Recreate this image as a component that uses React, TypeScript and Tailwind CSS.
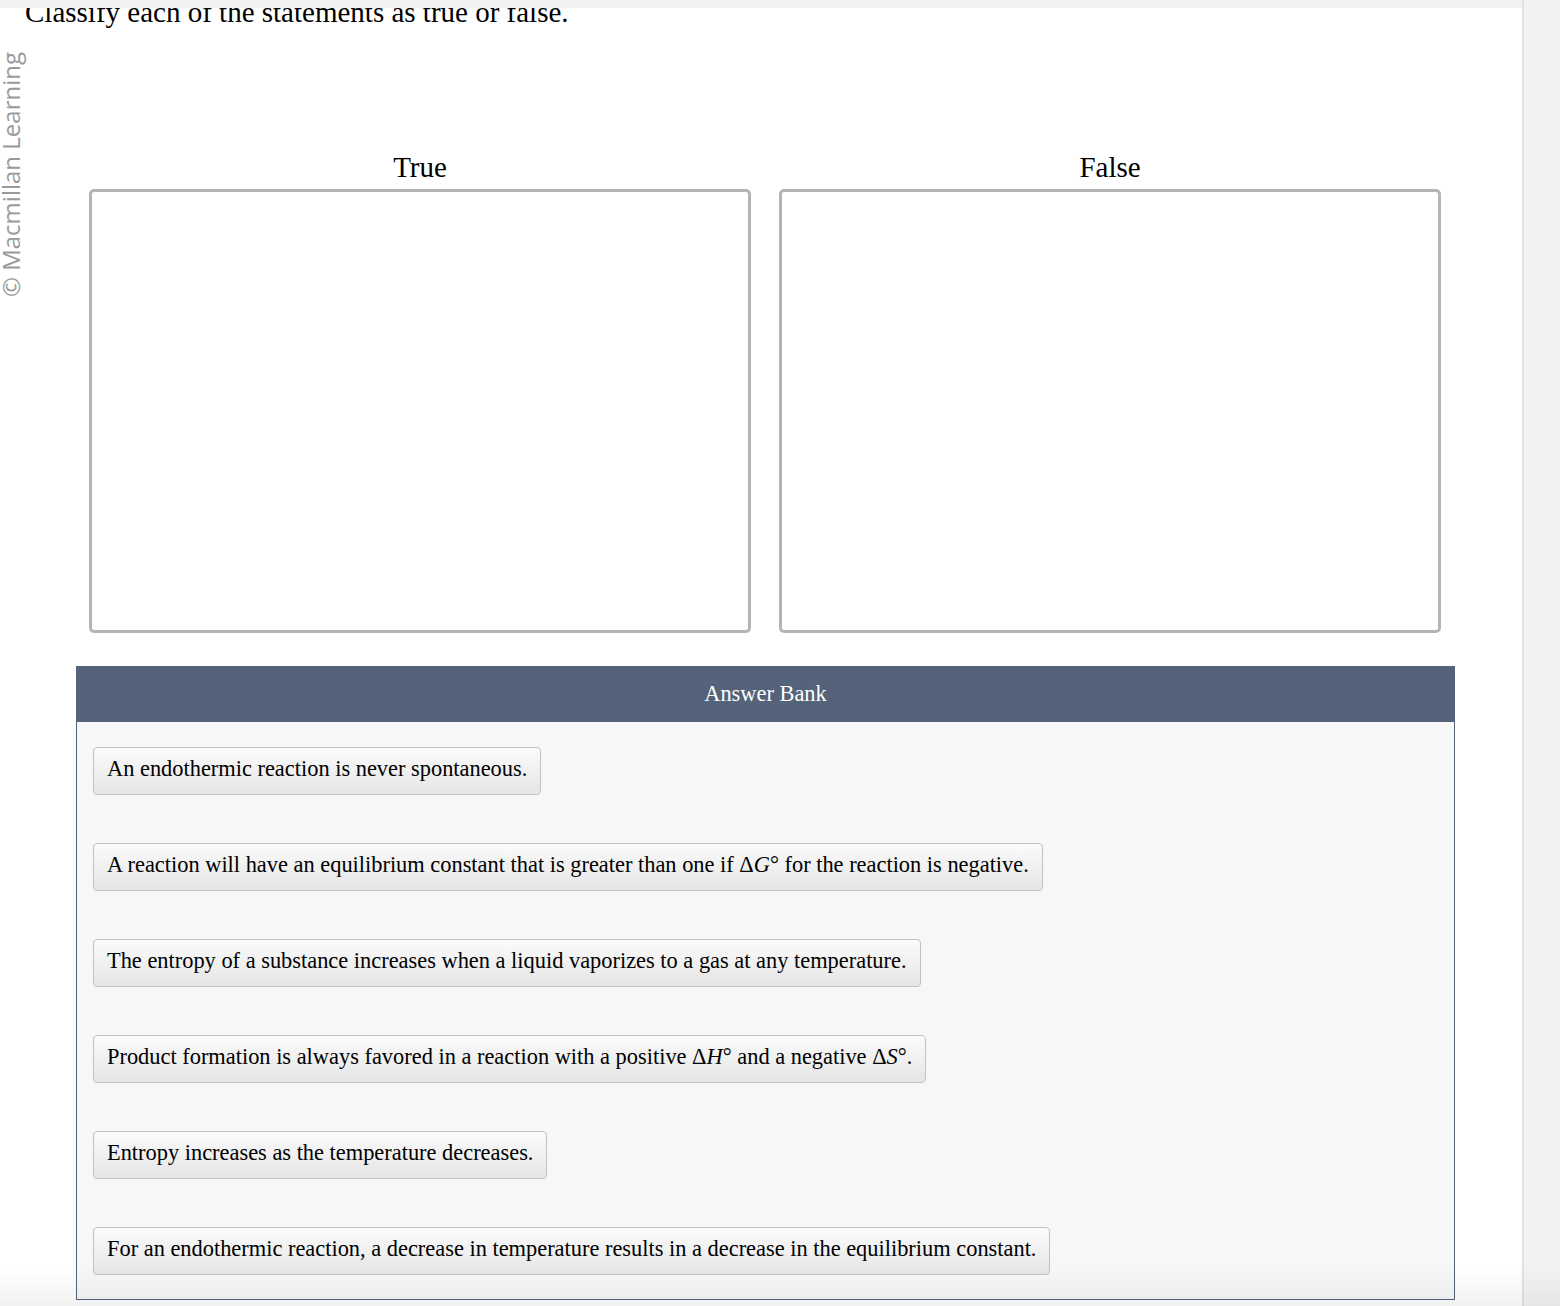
import React from "react";

const serif = { fontFamily: '"Liberation Serif", "Times New Roman", serif' };

function Delta({ v }: { v: string }) {
    return (
        <span>
            Δ<i>{v}</i>°
        </span>
    );
}

const statements: React.ReactNode[] = [
    "An endothermic reaction is never spontaneous.",
    <>A reaction will have an equilibrium constant that is greater than one if <Delta v="G" /> for the reaction is negative.</>,
    "The entropy of a substance increases when a liquid vaporizes to a gas at any temperature.",
    <>Product formation is always favored in a reaction with a positive <Delta v="H" /> and a negative <Delta v="S" />.</>,
    "Entropy increases as the temperature decreases.",
    "For an endothermic reaction, a decrease in temperature results in a decrease in the equilibrium constant.",
];

export default function App() {
    return (
        <div className="relative w-[1560px] h-[1306px] overflow-hidden bg-[#f2f2f2] flex" style={serif}>
            {/* page */}
            <div className="relative w-[1522px] h-full bg-white flex">
                {/* side credit */}
                <div className="w-[25px] shrink-0 relative">
                    <div
                        className="absolute left-[-1px] top-[297px] origin-top-left -rotate-90 whitespace-nowrap text-[24px] leading-[24px] text-[#9a9a9a]"
                        style={{ fontFamily: '"Open Sans", "Noto Sans", sans-serif' }}
                    >
                        © Macmillan Learning
                    </div>
                </div>

                <div className="flex-1 flex flex-col">
                    <div className="text-[29px] leading-[30px] text-black mt-[-3px] whitespace-nowrap">
                        Classify each of the statements as true or false.
                    </div>

                    {/* drop zones */}
                    <div className="flex gap-[28px] ml-[64px] mt-[125px] w-[1352px]">
                        {["True", "False"].map((label) => (
                            <div key={label} className="flex-1 flex flex-col">
                                <div className="text-center text-[29px] leading-[30px] text-black mb-[7px]">{label}</div>
                                <div className="h-[444px] border-[3px] border-[#b4b4b4] rounded-[5px] bg-white" />
                            </div>
                        ))}
                    </div>

                    {/* answer bank */}
                    <div className="ml-[51px] mt-[33px] w-[1379px] flex flex-col">
                        <div className="h-[56px] bg-[#546379] flex items-center justify-center text-white text-[22.4px]">
                            Answer Bank
                        </div>
                        <div className="bg-[#f7f7f7] border border-t-0 border-[#546379] px-[16px] pt-[25px] pb-[24px] flex flex-col items-start gap-[48px]">
                            {statements.map((s, i) => (
                                <div
                                    key={i}
                                    className="h-[48px] flex items-center px-[13px] pb-[5px] text-[22.4px] text-black border border-[#c2c2c2] rounded-[4px] bg-linear-to-b from-[#fbfbfb] to-[#e5e5e5] whitespace-nowrap"
                                >
                                    <span>{s}</span>
                                </div>
                            ))}
                        </div>
                    </div>
                </div>
            </div>

            {/* scrollbar gutter */}
            <div className="w-[38px] h-full border-l-2 border-[#e2e2e2] bg-[#f2f2f2]" />

            {/* top bar over the page */}
            <div className="pointer-events-none absolute left-0 top-0 w-[1522px] h-[8px] bg-[#f2f2f2]" />

            {/* bottom fade */}
            <div className="pointer-events-none absolute left-0 right-0 bottom-0 h-[40px] bg-linear-to-b from-transparent to-[#000000]/5" />
        </div>
    );
}
